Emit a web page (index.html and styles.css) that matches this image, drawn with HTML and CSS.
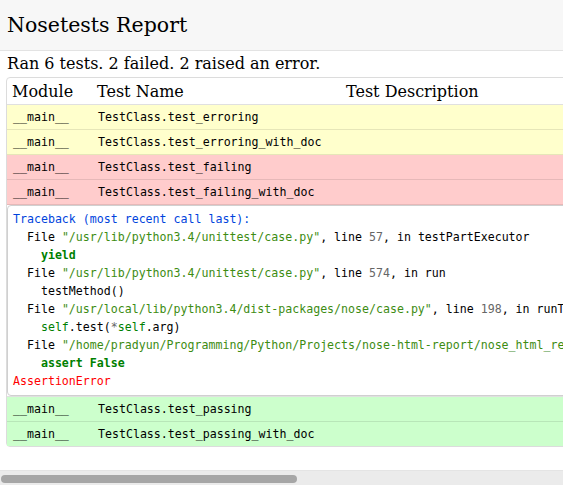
FILE: index.html
```html
<!DOCTYPE html>
<html>
<head>
<meta charset="utf-8">
<title>Nosetests Report</title>
<link rel="stylesheet" href="styles.css">
</head>
<body>
<header class="top">
  <h1 class="title">Nosetests Report</h1>
</header>
<main class="content">
  <p class="summary">Ran 6 tests. 2 failed. 2 raised an error.</p>
  <table class="results">
    <colgroup><col class="c-mod"><col class="c-name"><col class="c-desc"></colgroup>
    <thead>
      <tr><th>Module</th><th>Test Name</th><th>Test Description</th></tr>
    </thead>
    <tbody>
      <tr class="error"><td>__main__</td><td>TestClass.test_erroring</td><td></td></tr>
      <tr class="error"><td>__main__</td><td>TestClass.test_erroring_with_doc</td><td></td></tr>
      <tr class="fail"><td>__main__</td><td>TestClass.test_failing</td><td></td></tr>
      <tr class="fail"><td>__main__</td><td>TestClass.test_failing_with_doc</td><td></td></tr>
      <tr class="tb-row"><td colspan="3" class="tb-cell"><pre class="tb"><span class="gt">Traceback (most recent call last):</span>
  File <span class="s">"/usr/lib/python3.4/unittest/case.py"</span>, line <span class="m">57</span>, in testPartExecutor
    <span class="k">yield</span>
  File <span class="s">"/usr/lib/python3.4/unittest/case.py"</span>, line <span class="m">574</span>, in run
    testMethod()
  File <span class="s">"/usr/local/lib/python3.4/dist-packages/nose/case.py"</span>, line <span class="m">198</span>, in runTest
    <span class="bp">self</span>.test(<span class="o">*</span><span class="bp">self</span>.arg)
  File <span class="s">"/home/pradyun/Programming/Python/Projects/nose-html-report/nose_html_report/tests/test_sample_report.py"</span>, line <span class="m">15</span>, in test_failing_with_doc
    <span class="k">assert</span> <span class="k">False</span>
<span class="gr">AssertionError</span></pre></td></tr>
      <tr class="pass"><td>__main__</td><td>TestClass.test_passing</td><td></td></tr>
      <tr class="pass"><td>__main__</td><td>TestClass.test_passing_with_doc</td><td></td></tr>
    </tbody>
  </table>
</main>
<div class="hscroll" aria-hidden="true"><div class="hscroll-thumb"></div></div>
</body>
</html>
```

FILE: styles.css
```css
html, body {
  margin: 0;
  padding: 0;
  background: #fff;
  color: #000;
  font-family: "DejaVu Serif", serif;
  font-size: 16px;
}

.top {
  background: #f7f7f7;
  border-bottom: 1px solid #e3e3e3;
  padding: 11px 7px 0;
  height: 39px;
}

.title {
  margin: 0;
  font-size: 20.5px;
  font-weight: normal;
  line-height: 28px;
}

.content {
  padding: 0 7px 24px 6px;
}

.summary {
  margin: 3px 0 3px 1px;
  line-height: 20px;
}

.results {
  border-collapse: separate;
  border-spacing: 0;
  border: 1px solid #dcdcdc;
  border-radius: 4px;
}

.c-mod { width: 85px; }
.c-name { width: 249px; }

.results th {
  text-align: left;
  font-weight: normal;
  padding: 0 5px;
  height: 26px;
  border-bottom: 1px solid #e0e0e0;
}

.results td {
  font-family: "DejaVu Sans Mono", monospace;
  font-size: 11.6px;
  padding: 0 6px;
  height: 24px;
  border-bottom: 1px solid #e0e0e0;
  white-space: nowrap;
}

.error td { background: #ffffcc; border-bottom-color: #e6e6b8; }
.fail td { background: #ffcccc; border-bottom-color: #e6b8b8; }
.pass td { background: #ccffcc; border-bottom-color: #b8e6b8; }
.results tbody tr:last-child td { border-bottom: none; }

.results td.tb-cell {
  padding: 0;
  height: auto;
  background: #fff;
}

.tb {
  margin: 0;
  padding: 4px 5px 5px 5px;
  border: 1px solid #d0d0d0;
  border-radius: 4px;
  background: #fff;
  font-family: "DejaVu Sans Mono", monospace;
  font-size: 11.6px;
  line-height: 18px;
  color: #000;
}

.gt { color: #0044dd; }
.s { color: #3d8c12; }
.m { color: #666666; }
.k { color: #008000; font-weight: bold; }
.bp { color: #008000; }
.o { color: #666666; }
.gr { color: #ff0000; }

.hscroll {
  position: fixed;
  left: 0;
  right: 0;
  bottom: 0;
  height: 15px;
  background: #ebebeb;
  border-top: 1px solid #e4e4e4;
  box-sizing: border-box;
}

.hscroll-thumb {
  margin: 4px 0 0 1px;
  width: 296px;
  height: 8px;
  border-radius: 4px;
  background: #a6a6a6;
}
```
